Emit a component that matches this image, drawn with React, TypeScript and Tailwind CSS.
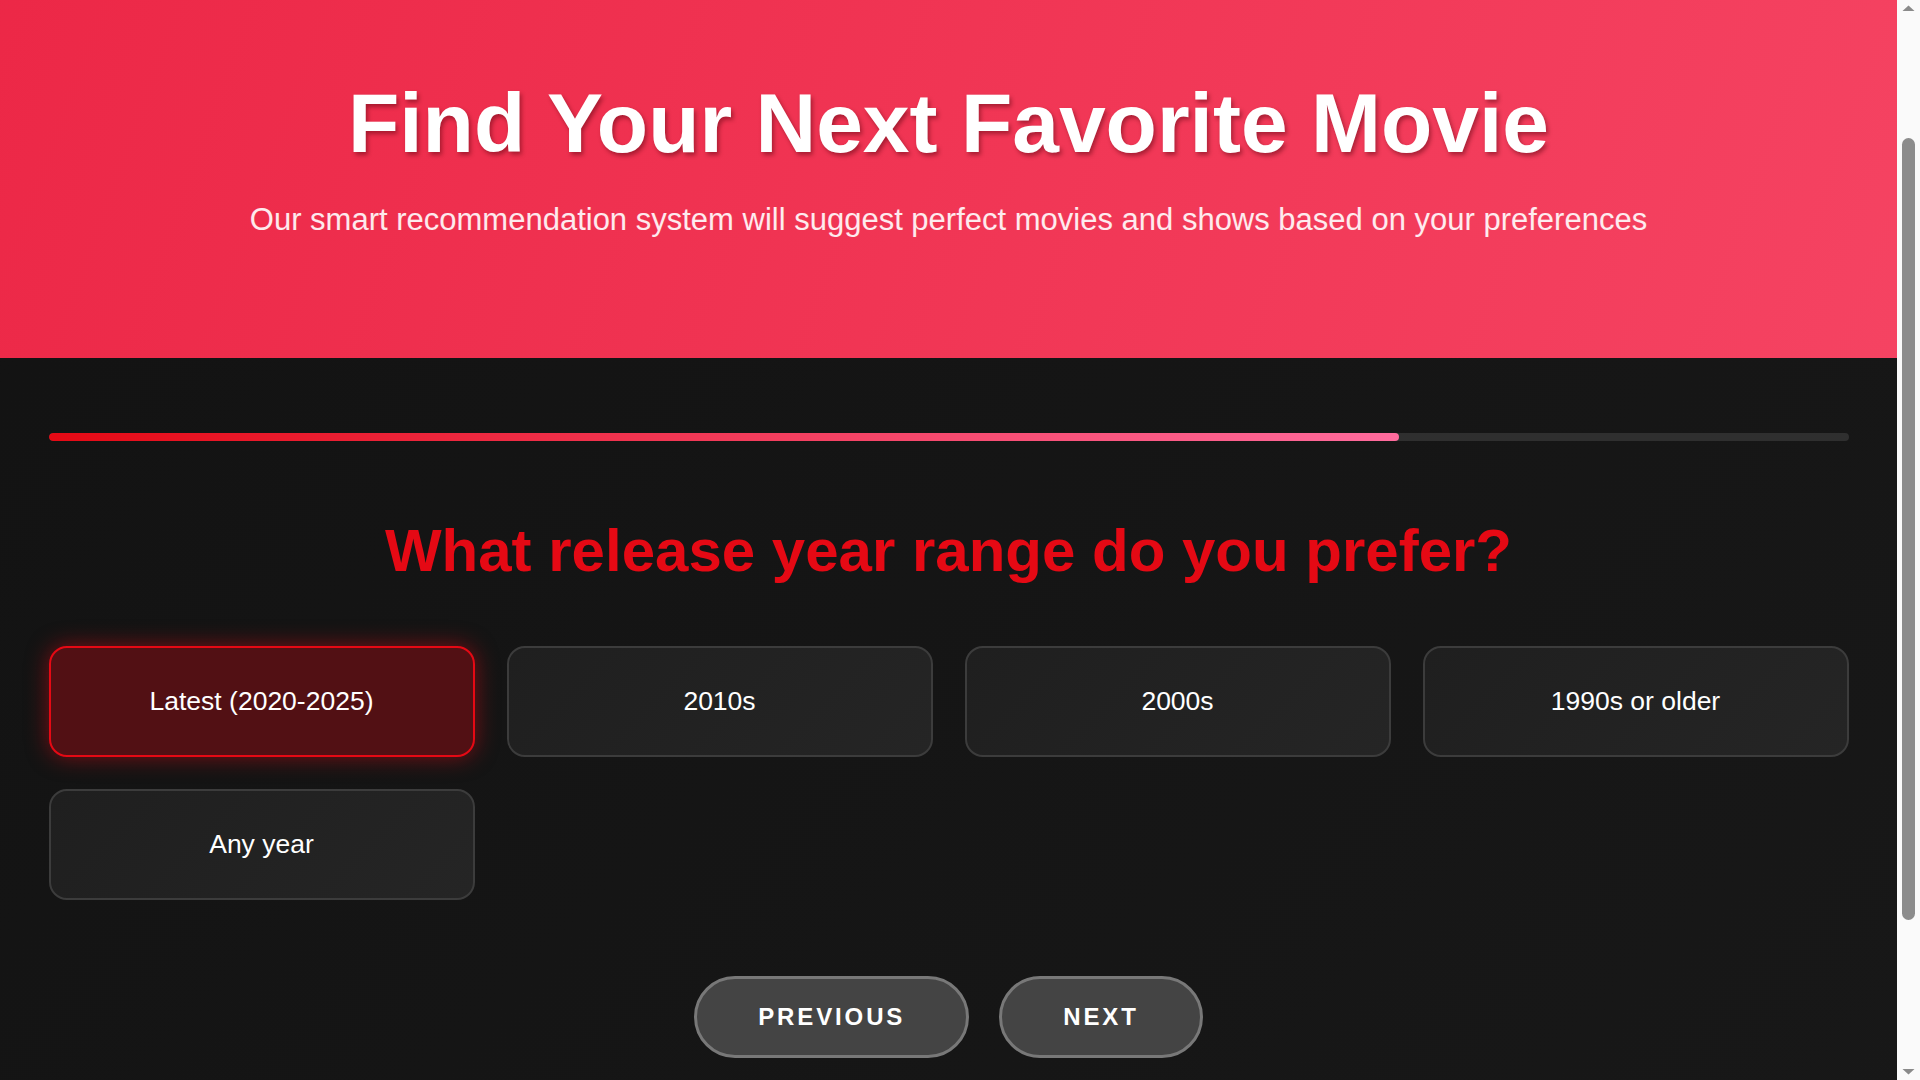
import React, { useLayoutEffect, useEffect, useState } from "react";

const options = ["Latest (2020-2025)", "2010s", "2000s", "1990s or older", "Any year"];

function FakeScrollbar() {
  return (
    <div className="fixed right-0 top-0 z-50 h-screen w-[23px] bg-[#fafafa]">
      <svg className="absolute left-0 top-[2px]" width="23" height="14" viewBox="0 0 23 14">
        <polygon points="5.5,9 11.5,3.5 17.5,9" fill="#8a8a8a" />
      </svg>
      <div className="absolute left-[5px] top-[138px] h-[782px] w-[13px] rounded-full bg-[#8c8c8c]" />
      <svg className="absolute bottom-[2px] left-0" width="23" height="14" viewBox="0 0 23 14">
        <polygon points="5.5,5 11.5,10.5 17.5,5" fill="#8a8a8a" />
      </svg>
    </div>
  );
}

export default function App() {
  const [selected, setSelected] = useState(0);

  useLayoutEffect(() => {
    window.scrollTo(0, 167);
  }, []);
  useEffect(() => {
    const id = window.setTimeout(() => window.scrollTo(0, 167), 0);
    return () => window.clearTimeout(id);
  }, []);

  return (
    <div
      className="min-h-screen pr-[23px] bg-[#141414] text-white"
      style={{ fontFamily: '"Liberation Sans", Arial, sans-serif' }}
    >
      <div className="min-h-screen bg-[linear-gradient(135deg,#121212,#181818)]">
        <header className="flex flex-col items-center bg-[linear-gradient(110deg,#ec2746_0%,#f54362_100%)] pt-[242px] pb-[121px] text-center">
          <h1 className="text-[84px] font-bold leading-[1.15] text-white [text-shadow:2px_3px_4px_rgba(80,0,10,0.45)]">
            Find Your Next Favorite Movie
          </h1>
          <p className="mt-[30px] text-[31px] leading-[1.15] text-white/90">
            Our smart recommendation system will suggest perfect movies and shows based on your preferences
          </p>
        </header>

        <main className="mx-auto w-full max-w-[1800px] pt-[75px] pb-[221px]">
          <div className="h-2 w-full overflow-hidden rounded-full bg-[#2f2f2f]">
            <div className="h-full w-3/4 rounded-full bg-[linear-gradient(90deg,#e50914,#ff6b9d)]" />
          </div>

          <h2 className="mt-[75px] text-center text-[60px] font-bold leading-[1.15] text-[#e50914]">
            What release year range do you prefer?
          </h2>

          <div className="mt-[61px] grid grid-cols-4 gap-8">
            {options.map((opt, i) => (
              <button
                key={opt}
                onClick={() => setSelected(i)}
                className={
                  i === selected
                    ? "flex h-[111px] items-center justify-center rounded-[18px] border-[2.5px] border-[#e50914] bg-[#521014] text-[26.5px] text-white shadow-[0_0_22px_rgba(229,9,20,0.5)]"
                    : "flex h-[111px] items-center justify-center rounded-[18px] border-[2.5px] border-[#3c3c3c] bg-[linear-gradient(135deg,#1f1f1f,#252525)] text-[26.5px] text-white"
                }
              >
                {opt}
              </button>
            ))}
          </div>

          <div className="mt-[76px] flex justify-center gap-[30px]">
            <button className="rounded-full border-[3px] border-[#787878] bg-[#444444] px-[61px] py-5 text-[24px] font-bold uppercase tracking-[0.12em] text-white">
              Previous
            </button>
            <button className="rounded-full border-[3px] border-[#787878] bg-[#444444] px-[61px] py-5 text-[24px] font-bold uppercase tracking-[0.12em] text-white">
              Next
            </button>
          </div>
        </main>
      </div>
      <FakeScrollbar />
    </div>
  );
}
